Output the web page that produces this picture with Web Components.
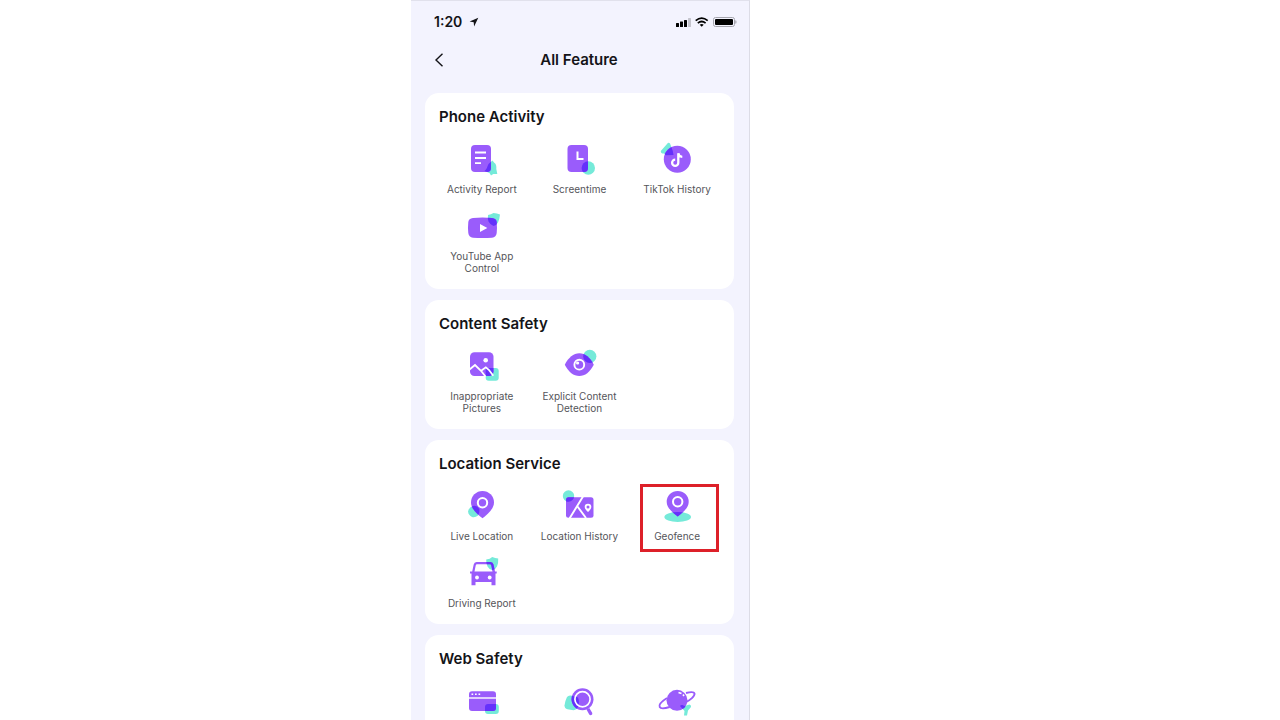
<!DOCTYPE html>
<html lang="en">
<head>
<meta charset="utf-8">
<title>All Feature</title>
<style>
  body {
    margin: 0;
    background: #fff;
    font-family: Inter, "Liberation Sans", sans-serif;
    color: #141418;
  }
</style>
</head>
<body>
<app-stage>
  <phone-screen>
    <status-bar time="1:20"></status-bar>
    <nav-header>All Feature</nav-header>
    <feature-list>
      <feature-card heading="Phone Activity">
        <feature-item icon="report">Activity Report</feature-item>
        <feature-item icon="screentime">Screentime</feature-item>
        <feature-item icon="tiktok">TikTok History</feature-item>
        <feature-item icon="youtube">YouTube App Control</feature-item>
      </feature-card>
      <feature-card heading="Content Safety">
        <feature-item icon="picture">Inappropriate Pictures</feature-item>
        <feature-item icon="eye">Explicit Content Detection</feature-item>
      </feature-card>
      <feature-card heading="Location Service">
        <feature-item icon="pin">Live Location</feature-item>
        <feature-item icon="map">Location History</feature-item>
        <feature-item icon="geofence" marked>Geofence</feature-item>
        <feature-item icon="car">Driving Report</feature-item>
      </feature-card>
      <feature-card heading="Web Safety">
        <feature-item icon="browser"></feature-item>
        <feature-item icon="search"></feature-item>
        <feature-item icon="planet"></feature-item>
      </feature-card>
    </feature-list>
  </phone-screen>
</app-stage>

<script>
// base: main purple shape, accent: mint shape (its overlap with base turns
// deep blue), detail: white marks on top
const ICONS = {
  report: {
    base: `<rect x="13" y="5" width="20" height="27" rx="4"/>`,
    accent: `<path d="M34.500 20.500l1.500 2c2.500 1.500 2.500 4 2.300 6.500l1 5h-4l-2.300 1.500-1.500-2.500-5-2c2.500-2 2.500-4 4-7z"/>`,
    detail: `<path d="M17 12.500h11M17 18h11M17 23.200h6" stroke-width="1.8"/>`,
  },
  screentime: {
    base: `<rect x="12.5" y="5" width="20.5" height="27" rx="4"/>`,
    accent: `<circle cx="33.3" cy="28" r="6.7"/>`,
    detail: `<path d="M22.500 11.500v7.500h6" stroke-width="2"/>`,
  },
  tiktok: {
    base: `<circle cx="24.3" cy="19.3" r="13.5"/>`,
    accent: `<path d="M7.800 11 14 4q1.500-2 3-.5l1 2.500q2 4.500 2.500 9l-8 .3q-.5-2-2-1.700-2.700 0-2.700-2.600z"/>`,
    detail: `<path d="M25.300 13.200v9.500a3.100 3.100 0 1 1-3.100-3.100M25.300 13.200c.3 2.300 2 3.600 4 3.700" stroke-width="2.3"/>`,
  },
  youtube: {
    base: `<path d="M15 10.900q9.500-1 19 0 4.500.5 4.700 4.100.5 5.500 0 11-.4 4.200-4.700 4.700-9.500.8-19 0-4.300-.5-4.700-4.700-.6-5.500 0-11 .3-3.600 4.700-4.100z"/>`,
    accent: `<path d="M30 8q3-.3 5.500-2 3.500.2 6.500 1.500-.4 4.500-2 8-1.500 3-4.500 3.500-3.500-1.500-5-4.500-1-3-.5-6.500z"/>`,
    detail: `<path d="M22 17v8l7.300-4z" fill="#fff" stroke="none"/>`,
  },
  picture: {
    base: `<rect x="12" y="5.3" width="23.5" height="23.7" rx="4.5"/>`,
    accent: `<rect x="27.7" y="21" width="13" height="12.7" rx="3"/>`,
    detail: `<circle cx="27.7" cy="13.3" r="2.3" fill="#fff" stroke="none"/>
      <path d="M11.500 22.500 17 18l6 5.800 4.500 5.700M22.800 24l5-3.700 3 2.500 4.500 6" stroke-width="1.8"/>`,
  },
  eye: {
    base: `<path d="M9.800 17.700C13.500 10.500 18.500 6.300 24.300 6.300s10.800 4.200 14.500 11.400C35 25 30 29 24.300 29S13.500 25 9.800 17.700z"/>`,
    accent: `<circle cx="34.8" cy="9.3" r="6.6"/>`,
    detail: `<circle cx="24.3" cy="17.7" r="4.9" stroke-width="1.9"/>
      <circle cx="22.6" cy="16" r="1.6" fill="#fff" stroke="none"/>`,
  },
  pin: {
    base: `<path d="M24.500 31.300C20 28 13 22 13 15.500a11.500 11.500 0 0 1 23 0c0 6.500-7 12.500-11.500 15.800z"/>`,
    accent: `<path d="M15 19q4-.8 6.300 3 .5 4-1.300 6.500-3 2.500-6 1.500-3.500-2-4-5.500.8-4 5-5.500z"/>`,
    detail: `<circle cx="24.5" cy="15.7" r="4.7" stroke-width="2"/>`,
  },
  map: {
    base: `<rect x="11" y="10.3" width="27.5" height="20.4" rx="2.5"/>`,
    accent: `<circle cx="13.5" cy="9" r="5.7"/>`,
    detail: `<path d="M28 9.500 14.500 31.500M22.500 19.500 31 31" stroke-width="1.9"/>
      <path d="M33 25c-2.200-2-3.300-3.600-3.300-5a3.300 3.300 0 0 1 6.600 0c0 1.400-1.100 3-3.300 5z" fill="#fff" stroke="none"/>
      <circle cx="33" cy="20" r="1.5" fill="#9a5cfb" stroke="none"/>`,
  },
  geofence: {
    base: `<path d="M24.700 29.500C20.500 26.500 13.700 21 13.700 14.900a11 11 0 0 1 22 0c0 6.100-6.800 11.600-11 14.600z"/>`,
    accent: `<ellipse cx="24.7" cy="30" rx="13.3" ry="5"/>`,
    detail: `<circle cx="24.7" cy="14.7" r="4.7" stroke-width="2"/>`,
  },
  car: {
    base: `<path fill-rule="evenodd" clip-rule="evenodd" d="M18.500 8h14q2.500 0 3 2.500l1.500 7h1.700v2H37.500V31.300H33.500V28H17.500v3.300h-4V19.500H12v-2h2.200l1.500-7q.5-2.500 2.800-2.500zM19 10.300q-1 0-1.300 1.200l-1.200 6h18l-1.200-6q-.3-1.200-1.300-1.200z"/>`,
    accent: `<path d="M28.200 5.500q4-.5 6-2.500 3 1.300 6 1.500.3 5-1.200 8-1.500 3-4.500 3.800-3.500-1-5-3.800-1.500-3.500-1.300-7z"/>`,
    detail: `<circle cx="19" cy="23.5" r="1.9" fill="#fff" stroke="none"/>
      <circle cx="31.7" cy="23.5" r="1.9" fill="#fff" stroke="none"/>`,
  },
  browser: {
    base: `<rect x="11" y="9.3" width="27" height="19.7" rx="3"/>`,
    accent: `<rect x="27" y="22" width="13.8" height="10" rx="3"/>`,
    detail: `<path d="M11 16h27" stroke-width="1.4"/>
      <path d="M13.500 12.200h1.700M17 12.200h1.700M20.500 12.200h1.700" stroke-width="1.6"/>`,
  },
  search: {
    base: `<circle cx="27.5" cy="17.3" r="11"/><path d="M31.500 27.500l2.800-1.500 3 5q.4 2-1.500 2.300-1.200 0-1.700-1z"/>`,
    accent: `<path d="M12 15q1.500-2 4-1.500l7 2q1.500 4 .5 8-1.500 4.500-5 4.700l-6-1q-3-.7-3-3.700.3-4 2.500-8.500z"/>`,
    detail: `<circle cx="27.5" cy="17.3" r="7.6" stroke-width="1.7"/>`,
  },
  planet: {
    base: `<circle cx="24" cy="18.3" r="10.5"/>`,
    accent: `<path d="M27 24q1-1.500 2.500-1l2 1 5-1.500q2 .5 1.500 2.500l-3 3.500-1 5h-3l.5-4.500z"/>`,
    detail: `<path d="M25.500 10.500l3 1M30 12.500l1 1.500" stroke-width="1.6"/>
      <path d="M14 16C8.500 19.500 5.500 23 6.700 25c1 2 5 1.500 10 0M31.500 21c6-2.800 10.500-7 10-9.500-.5-1.800-4-1.600-8.500-.5" stroke="#9a5cfb" stroke-width="1.9"/>`,
  },
};

class AppStage extends HTMLElement {
  constructor() {
    super();
    this.attachShadow({ mode: "open" });
    this.shadowRoot.innerHTML = `
      <style>
        :host {
          display: grid;
          grid-template-columns: 411fr minmax(320px, 339fr) 530fr;
          height: 100vh;
          overflow: hidden;
        }
        ::slotted(*) {
          grid-column: 2;
        }
      </style>
      <slot></slot>
    `;
  }
}

class PhoneScreen extends HTMLElement {
  constructor() {
    super();
    this.attachShadow({ mode: "open" });
    this.shadowRoot.innerHTML = `
      <style>
        :host {
          display: flex;
          flex-direction: column;
          box-sizing: border-box;
          min-height: 100vh;
          background: #f3f3fe;
          border-top: 1px solid #e1e1ec;
          border-right: 1px solid #dcdce6;
        }
      </style>
      <slot></slot>
    `;
  }
}

class StatusBar extends HTMLElement {
  constructor() {
    super();
    this.attachShadow({ mode: "open" });
    this.shadowRoot.innerHTML = `
      <style>
        :host {
          display: flex;
          align-items: center;
          padding: 12px 12px 0 23px;
          height: 20px;
          font-size: 14px;
          font-weight: 600;
        }
        .arrow {
          margin-left: 7px;
        }
        .signal {
          margin-left: auto;
        }
      </style>
      <span id="time"></span>
      <svg class="arrow" width="10" height="10" viewBox="0 0 10 10">
        <path d="M9.300.8.600 4.600l4.100.6.4 4.200z" fill="#141418"/>
      </svg>
      <svg class="signal" width="61" height="12" viewBox="0 0 61 12">
        <g fill="#000">
          <rect x="0" y="7" width="3" height="4" rx=".5"/>
          <rect x="4" y="5.500" width="3" height="5.500" rx=".5"/>
          <rect x="8" y="4" width="3" height="7" rx=".5"/>
          <rect x="12" y="2" width="3" height="9" rx=".5" fill="#c4c4cd"/>
        </g>
        <g fill="none" stroke="#000" stroke-width="1.7">
          <path d="M19.700 4.600q6-5 12 0M21.800 7.100q3.900-3.200 7.800 0"/>
          <path d="M23.700 8.700q2-1.500 4 0l-2 2z" fill="#000" stroke="none"/>
        </g>
        <rect x="37.5" y="1.5" width="21" height="9" rx="2" fill="none" stroke="#a5a5ae"/>
        <rect x="39" y="3" width="18" height="6" rx="1" fill="#000"/>
        <path d="M59.700 4.500q1 1.500 0 3z" fill="#a5a5ae" stroke="#a5a5ae" stroke-width=".6"/>
      </svg>
    `;
  }

  connectedCallback() {
    this.shadowRoot.querySelector("#time").textContent = this.getAttribute("time");
  }
}

class NavHeader extends HTMLElement {
  constructor() {
    super();
    this.attachShadow({ mode: "open" });
    this.shadowRoot.innerHTML = `
      <style>
        :host {
          display: grid;
          grid-template-columns: 48px 1fr 48px;
          align-items: center;
          padding: 11px 2px 17px 0;
          margin-top: 3px;
        }
        button {
          display: flex;
          padding: 8px 0 8px 23px;
          border: none;
          background: none;
          color: inherit;
          cursor: pointer;
        }
        svg {
          flex: none;
        }
        h1 {
          margin: 0;
          text-align: center;
          font-size: 15px;
          line-height: 20px;
          font-weight: 600;
        }
      </style>
      <button aria-label="Back">
        <svg width="10" height="16" viewBox="0 0 10 16">
          <path d="M8.500 1.800 2 8l6.500 6.200" fill="none" stroke="currentColor" stroke-width="1.4"/>
        </svg>
      </button>
      <h1><slot></slot></h1>
    `;
  }
}

class FeatureList extends HTMLElement {
  constructor() {
    super();
    this.attachShadow({ mode: "open" });
    this.shadowRoot.innerHTML = `
      <style>
        :host {
          display: flex;
          flex-direction: column;
          gap: 11px;
          padding: 0 15px 0 14px;
        }
      </style>
      <slot></slot>
    `;
  }
}

class FeatureCard extends HTMLElement {
  constructor() {
    super();
    this.attachShadow({ mode: "open" });
    this.shadowRoot.innerHTML = `
      <style>
        :host {
          display: block;
          padding: 14px 8px 15px;
          border-radius: 14px;
          background: #fff;
        }
        h2 {
          margin: 0 6px 13px;
          font-size: 15px;
          line-height: 20px;
          font-weight: 600;
        }
        div {
          display: grid;
          grid-template-columns: repeat(3, 1fr);
          row-gap: 12px;
        }
      </style>
      <h2></h2>
      <div><slot></slot></div>
    `;
  }

  connectedCallback() {
    this.shadowRoot.querySelector("h2").textContent = this.getAttribute("heading");
  }
}

class FeatureItem extends HTMLElement {
  constructor() {
    super();
    this.attachShadow({ mode: "open" });
  }

  connectedCallback() {
    const icon = ICONS[this.getAttribute("icon")];
    this.shadowRoot.innerHTML = `
      <style>
        :host {
          display: block;
          position: relative;
        }
        :host([marked])::after {
          content: "";
          position: absolute;
          inset: -3px 7px -10px 12px;
          border: 3px solid #dd2029;
          pointer-events: none;
        }
        button {
          display: flex;
          flex-direction: column;
          align-items: center;
          gap: 7px;
          width: 100%;
          padding: 0;
          border: none;
          background: none;
          font: inherit;
          font-size: 10px;
          line-height: 12px;
          color: #55555a;
          cursor: pointer;
        }
        span {
          max-width: 86px;
        }
      </style>
      <button>
        <svg width="48" height="36" viewBox="0 0 48 36" aria-hidden="true">
          <clipPath id="base">${icon.base}</clipPath>
          <g fill="#75ead9">${icon.accent}</g>
          <g fill="#9a5cfb">${icon.base}</g>
          <g fill="#6431fb" clip-path="url(#base)">${icon.accent}</g>
          <g fill="none" stroke="#fff">${icon.detail}</g>
        </svg>
        <span><slot></slot></span>
      </button>
    `;
  }
}

customElements.define("app-stage", AppStage);
customElements.define("phone-screen", PhoneScreen);
customElements.define("status-bar", StatusBar);
customElements.define("nav-header", NavHeader);
customElements.define("feature-list", FeatureList);
customElements.define("feature-card", FeatureCard);
customElements.define("feature-item", FeatureItem);
</script>
</body>
</html>
